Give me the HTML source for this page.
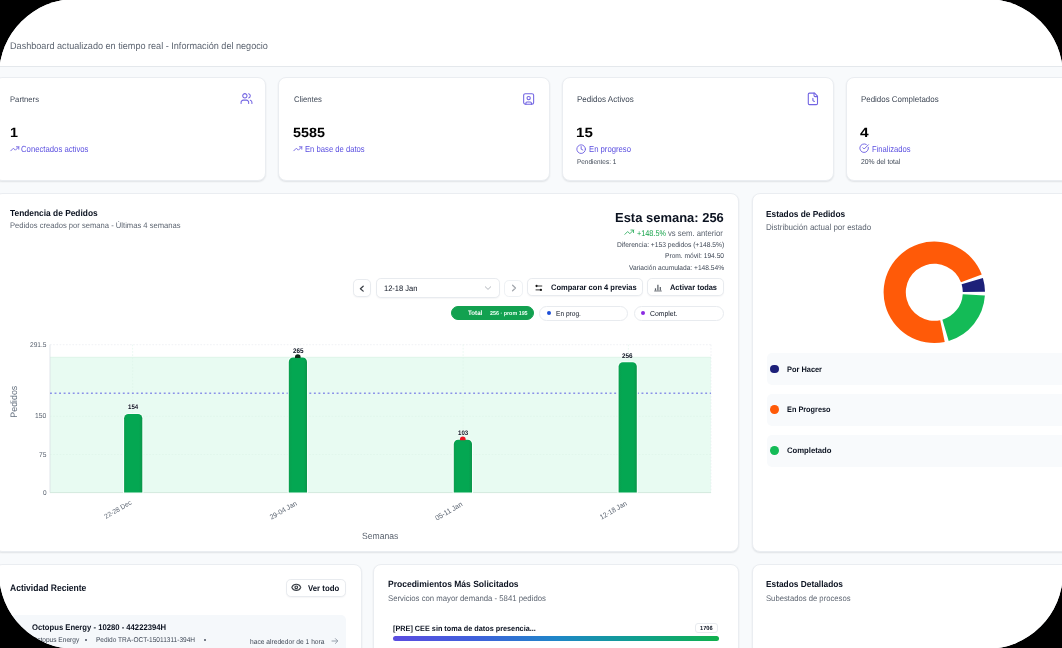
<!DOCTYPE html>
<html><head><meta charset="utf-8">
<style>
*{box-sizing:border-box;margin:0;padding:0}
html,body{width:1062px;height:648px;background:#000;overflow:hidden}
body{font-family:"Liberation Sans",sans-serif;color:#0f172a}
#wrap{position:absolute;left:-1px;top:-1px;width:1064px;height:650px;border-radius:76.6px;overflow:hidden;background:#f8fafc}
#in{position:absolute;left:1px;top:1px;width:1062px;height:648px;filter:blur(0.45px)}
#hdr{position:absolute;left:0;top:0;width:1062px;height:66.7px;background:#fff;border-bottom:1.6px solid #e4e8ec}
.t{position:absolute;white-space:nowrap;line-height:1;transform-origin:0 50%;text-rendering:geometricPrecision}
.card{position:absolute;background:#fff;border:1px solid #eaedf1;border-radius:8px;box-shadow:0 1px 1.6px rgba(20,25,35,.10)}
.btn{position:absolute;background:#fff;border:1.2px solid #e8ebef;border-radius:4.8px;box-shadow:0 1px 1.5px rgba(15,23,42,.04)}
.pill{position:absolute;background:#fff;border:1px solid #e8ebef;border-radius:9px}
.row{position:absolute;background:#f8fafc;border-radius:5px}
.dot{position:absolute;border-radius:50%}
svg{position:absolute;overflow:visible}
.ic{fill:none;stroke:#7264e2;stroke-width:1.9;stroke-linecap:round;stroke-linejoin:round}
</style></head><body>
<div id="wrap"><div id="in">
<div id="hdr"></div>

<!-- stat cards -->
<div class="card" style="left:-6px;top:77.1px;width:271.5px;height:103.8px"></div>
<div class="card" style="left:278px;top:77.1px;width:271.5px;height:103.8px"></div>
<div class="card" style="left:562px;top:77.1px;width:271.5px;height:103.8px"></div>
<div class="card" style="left:846px;top:77.1px;width:271.5px;height:103.8px"></div>

<!-- chart card -->
<div class="card" style="left:-6px;top:192.8px;width:745px;height:358.9px"></div>
<div class="card" style="left:751.6px;top:192.8px;width:330px;height:358.9px"></div>

<!-- bottom cards -->
<div class="card" style="left:-6px;top:563.6px;width:367.8px;height:120px"></div>
<div class="card" style="left:372.8px;top:563.6px;width:366.2px;height:120px"></div>
<div class="card" style="left:751.6px;top:563.6px;width:330px;height:120px"></div>

<!-- controls -->
<div class="btn" style="left:352.8px;top:279.2px;width:17.8px;height:17.6px"></div>
<div class="btn" style="left:375.7px;top:277.8px;width:124.6px;height:19.9px"></div>
<div class="btn" style="left:504.3px;top:279.6px;width:19.1px;height:17.4px;border-color:#eef1f4;box-shadow:none"></div>
<div class="btn" style="left:527.4px;top:277.9px;width:115.2px;height:18.6px"></div>
<div class="btn" style="left:647.2px;top:277.9px;width:77px;height:18.6px"></div>
<div class="pill" style="left:450.8px;top:305.5px;width:83.6px;height:14.8px;background:#12a150;border-color:#12a150"></div>
<div class="pill" style="left:539px;top:305.5px;width:89.2px;height:15.2px"></div>
<div class="pill" style="left:633.5px;top:305.5px;width:90px;height:15.2px"></div>
<div class="dot" style="left:546.8px;top:310.8px;width:4.4px;height:4.4px;background:#1d4ed8"></div>
<div class="dot" style="left:641.1px;top:310.8px;width:4.4px;height:4.4px;background:#8b2be2"></div>

<!-- legend rows -->
<div class="row" style="left:766.5px;top:353px;width:320px;height:32px"></div>
<div class="row" style="left:766.5px;top:393.7px;width:320px;height:32.5px"></div>
<div class="row" style="left:766.5px;top:435px;width:320px;height:31.5px"></div>
<div class="dot" style="left:770.3px;top:364.5px;width:8.8px;height:8.8px;background:#1d2079"></div>
<div class="dot" style="left:770.3px;top:405.2px;width:8.8px;height:8.8px;background:#ff5a08"></div>
<div class="dot" style="left:770.3px;top:446px;width:8.8px;height:8.8px;background:#14bb57"></div>

<!-- activity list item -->
<div class="row" style="left:10px;top:614.8px;width:335.5px;height:60px;background:#f5f8fb"></div>
<div class="dot" style="left:85px;top:638.7px;width:2px;height:2px;background:#4b5563"></div>
<div class="dot" style="left:203.8px;top:638.7px;width:2px;height:2px;background:#4b5563"></div>
<div class="btn" style="left:285.6px;top:578.8px;width:60px;height:18.4px"></div>

<!-- procedures -->
<div class="btn" style="left:694.9px;top:622.6px;width:23px;height:10.8px;border-radius:3px;box-shadow:none"></div>
<div style="position:absolute;left:393.3px;top:636px;width:325.5px;height:5.4px;border-radius:3px;background:linear-gradient(90deg,#5b4ce0 0%,#3f60dc 25%,#1f86c8 50%,#0f9f8e 75%,#10b04c 100%)"></div>

<!-- main svg: chart, donut, icons -->
<svg width="1062" height="648" viewBox="0 0 1062 648" style="left:0;top:0">
  <!-- chart band -->
  <rect x="50" y="357.3" width="661" height="135.2" fill="#e8fbf2"/>
  <line x1="50" y1="357.3" x2="711" y2="357.3" stroke="#d6f1e3" stroke-width="0.7"/>
  <!-- grid -->
  <g stroke="#e6e9ee" stroke-width="0.6" stroke-dasharray="1.6 1.6">
    <line x1="50" y1="344.7" x2="711" y2="344.7"/>
    <line x1="50" y1="416.4" x2="711" y2="416.4" stroke="#dcf3e7"/>
    <line x1="50" y1="454.5" x2="711" y2="454.5" stroke="#dcf3e7"/>
    <line x1="132.6" y1="344.7" x2="132.6" y2="492.5" stroke="#dcf3e7"/>
    <line x1="297.9" y1="344.7" x2="297.9" y2="492.5" stroke="#dcf3e7"/>
    <line x1="463.1" y1="344.7" x2="463.1" y2="492.5" stroke="#dcf3e7"/>
    <line x1="628.4" y1="344.7" x2="628.4" y2="492.5" stroke="#dcf3e7"/>
    <line x1="711" y1="344.7" x2="711" y2="492.5"/>
  </g>
  <line x1="50" y1="344.7" x2="50" y2="492.5" stroke="#d5dbe2" stroke-width="0.7"/>
  <line x1="50" y1="492.6" x2="711" y2="492.6" stroke="#cfe6da" stroke-width="0.9"/>
  <!-- avg line -->
  <line x1="50" y1="393.3" x2="711" y2="393.3" stroke="#8a91e8" stroke-width="1.6" stroke-dasharray="1.9 2.65"/>
  <!-- bars -->
  <defs><linearGradient id="bg" x1="0" x2="1" y1="0" y2="0"><stop offset="0" stop-color="#0a9e4e"/><stop offset="0.18" stop-color="#04a752"/><stop offset="0.82" stop-color="#04a752"/><stop offset="1" stop-color="#0b954a"/></linearGradient></defs>
  <g fill="url(#bg)" stroke="#f7fffb" stroke-width="2.2" paint-order="stroke">
    <path d="M124.1 492.5V418.3a4.3 4.3 0 0 1 4.3-4.3h9.6a4.3 4.3 0 0 1 4.3 4.3V492.5Z"/>
    <path d="M288.8 492.5V361.9a4.3 4.3 0 0 1 4.3-4.3h9.6a4.3 4.3 0 0 1 4.3 4.3V492.5Z"/>
    <path d="M453.8 492.5V444.1a4.3 4.3 0 0 1 4.3-4.3h9.6a4.3 4.3 0 0 1 4.3 4.3V492.5Z"/>
    <path d="M618.6 492.5V366.6a4.3 4.3 0 0 1 4.3-4.3h9.6a4.3 4.3 0 0 1 4.3 4.3V492.5Z"/>
  </g>
  <clipPath id="c1"><rect x="290" y="350" width="16" height="8.1"/></clipPath>
  <clipPath id="c2"><rect x="455" y="432" width="16" height="8.3"/></clipPath>
  <circle cx="297.8" cy="357.1" r="2.8" fill="#0c2a17" clip-path="url(#c1)"/>
  <circle cx="462.8" cy="439.2" r="2.8" fill="#ea1424" clip-path="url(#c2)"/>
  <!-- donut -->
  <path d="M985.00 291.86A50.7 50.7 0 0 0 982.91 277.90L961.63 284.21A28.5 28.5 0 0 1 962.80 292.05Z" fill="#1d2079"/><path d="M981.76 274.46A50.7 50.7 0 1 0 944.75 341.91L940.18 320.19A28.5 28.5 0 1 1 960.98 282.27Z" fill="#ff5a08"/><path d="M948.70 340.91A50.7 50.7 0 0 0 984.89 295.57L962.74 294.14A28.5 28.5 0 0 1 942.39 319.63Z" fill="#14bb57"/>
</svg>

<!-- users -->
<svg class="ic" viewBox="0 0 24 24" style="left:239.5px;top:91.9px;width:13px;height:13px"><path d="M16 21v-2a4 4 0 0 0-4-4H6a4 4 0 0 0-4 4v2"/><circle cx="9" cy="7" r="4"/><path d="M22 21v-2a4 4 0 0 0-3-3.87"/><path d="M16 3.13a4 4 0 0 1 0 7.75"/></svg>
<!-- contact -->
<svg class="ic" viewBox="0 0 24 24" style="left:522.3px;top:92.1px;width:13.3px;height:13.3px"><path d="M7 22v-2a2 2 0 0 1 2-2h6a2 2 0 0 1 2 2v2"/><circle cx="12" cy="11" r="3"/><rect x="3" y="3" width="18" height="19" rx="3"/></svg>
<!-- file -->
<svg class="ic" viewBox="0 0 24 24" style="left:806.1px;top:91.9px;width:13.8px;height:13.8px"><path d="M15 2H6a2 2 0 0 0-2 2v16a2 2 0 0 0 2 2h12a2 2 0 0 0 2-2V7Z"/><path d="M14 2v4a2 2 0 0 0 2 2h4"/><path d="M12 11v4l2.5 1.5"/></svg>
<!-- trending up x2 -->
<svg class="ic" viewBox="0 0 24 24" style="left:9.6px;top:144px;width:9.6px;height:9.6px;stroke-width:2.3"><polyline points="22 7 13.5 15.5 8.5 10.5 2 17"/><polyline points="16 7 22 7 22 13"/></svg>
<svg class="ic" viewBox="0 0 24 24" style="left:292.9px;top:144px;width:9.6px;height:9.6px;stroke-width:2.3"><polyline points="22 7 13.5 15.5 8.5 10.5 2 17"/><polyline points="16 7 22 7 22 13"/></svg>
<!-- clock -->
<svg class="ic" viewBox="0 0 24 24" style="left:576.2px;top:143.5px;width:10.3px;height:10.3px;stroke-width:2.2"><circle cx="12" cy="12" r="10"/><polyline points="12 6 12 12 16 14"/></svg>
<!-- check circle -->
<svg class="ic" viewBox="0 0 24 24" style="left:859.4px;top:143.4px;width:10.3px;height:10.3px;stroke-width:2.2"><path d="M21.801 10A10 10 0 1 1 17 3.335"/><path d="m9 11 3 3L22 4"/></svg>
<!-- green trending -->
<svg class="ic" viewBox="0 0 24 24" style="left:624.1px;top:226.9px;width:10.4px;height:10.4px;stroke:#22a957;stroke-width:1.9"><polyline points="22 7 13.5 15.5 8.5 10.5 2 17"/><polyline points="16 7 22 7 22 13"/></svg>
<!-- chevrons -->
<svg viewBox="0 0 10 10" style="left:357.3px;top:283.6px;width:9.4px;height:9.4px" fill="none" stroke="#3b3f46" stroke-width="1.35" stroke-linecap="round" stroke-linejoin="round"><path d="M6.6 2.4 3.6 5l3 2.6"/></svg>
<svg viewBox="0 0 10 10" style="left:509.2px;top:283.2px;width:10px;height:10px" fill="none" stroke="#a3a7ad" stroke-width="1.3" stroke-linecap="round" stroke-linejoin="round"><path d="M3.6 2.3 6.5 5l-2.9 2.7"/></svg>
<svg viewBox="0 0 10 10" style="left:483px;top:283px;width:10px;height:10px" fill="none" stroke="#b3b7bd" stroke-width="1" stroke-linecap="round" stroke-linejoin="round"><path d="M2.3 3.8 5 6.4l2.7-2.6"/></svg>
<!-- sliders -->
<svg viewBox="0 0 10 10" style="left:533.5px;top:282.5px;width:10px;height:10px"><circle cx="2.6" cy="3" r="1.15" fill="#111"/><line x1="3.5" y1="3" x2="8.2" y2="3" stroke="#222" stroke-width="0.9"/><circle cx="6.9" cy="6.9" r="1.15" fill="#111"/><line x1="1.6" y1="6.9" x2="6" y2="6.9" stroke="#222" stroke-width="0.9"/></svg>
<!-- bar chart -->
<svg viewBox="0 0 10 10" style="left:653px;top:282.5px;width:10px;height:10px" stroke="#555b63" stroke-linecap="butt"><line x1="2.5" y1="5.3" x2="2.5" y2="7.6" stroke-width="1.2"/><line x1="4.9" y1="1.7" x2="4.9" y2="7.6" stroke-width="1.2"/><line x1="7.3" y1="4" x2="7.3" y2="7.6" stroke-width="1.2"/><line x1="1.2" y1="8" x2="8.8" y2="8" stroke-width="0.8"/></svg>
<!-- eye -->
<svg viewBox="0 0 24 24" style="left:290.9px;top:582.4px;width:10.6px;height:10.6px" fill="none" stroke="#3a3f46" stroke-width="2.6" stroke-linecap="round" stroke-linejoin="round"><path d="M2.062 12.348a1 1 0 0 1 0-.696 10.75 10.75 0 0 1 19.876 0 1 1 0 0 1 0 .696 10.75 10.75 0 0 1-19.876 0"/><circle cx="12" cy="12" r="3"/></svg>
<!-- arrow right -->
<svg viewBox="0 0 10 10" style="left:329.5px;top:636px;width:10px;height:10px" fill="none" stroke="#8d96a3" stroke-width="0.9" stroke-linecap="round" stroke-linejoin="round"><path d="M2 5h5.6M5.4 2.6 7.8 5 5.4 7.4"/></svg>


<div class="t" style="left:10.3px;top:42px;font-size:9.6px;font-weight:400;color:#5c6470;transform:scaleX(0.948)">Dashboard actualizado en tiempo real - Información del negocio</div>
<div class="t" style="left:10.3px;top:96px;font-size:8.1px;font-weight:400;color:#3f4856;transform:scaleX(0.947)">Partners</div>
<div class="t" style="left:9.7px;top:126px;font-size:13.4px;font-weight:700;color:#000;transform:scaleX(1.073)">1</div>
<div class="t" style="left:21.0px;top:145px;font-size:8.8px;font-weight:400;color:#5a4ee0;transform:scaleX(0.879)">Conectados activos</div>
<div class="t" style="left:293.6px;top:96px;font-size:8.2px;font-weight:400;color:#3f4856;transform:scaleX(0.941)">Clientes</div>
<div class="t" style="left:293.1px;top:126px;font-size:13.4px;font-weight:700;color:#000;transform:scaleX(1.070)">5585</div>
<div class="t" style="left:304.7px;top:145px;font-size:8.8px;font-weight:400;color:#5a4ee0;transform:scaleX(0.872)">En base de datos</div>
<div class="t" style="left:577.1px;top:95px;font-size:8.5px;font-weight:400;color:#3f4856;transform:scaleX(0.945)">Pedidos Activos</div>
<div class="t" style="left:576.4px;top:126px;font-size:13.4px;font-weight:700;color:#000;transform:scaleX(1.127)">15</div>
<div class="t" style="left:588.7px;top:145px;font-size:8.8px;font-weight:400;color:#5a4ee0;transform:scaleX(0.876)">En progreso</div>
<div class="t" style="left:577.1px;top:160px;font-size:6.8px;font-weight:400;color:#3f4856;transform:scaleX(0.945)">Pendientes: 1</div>
<div class="t" style="left:860.8px;top:95px;font-size:8.4px;font-weight:400;color:#3f4856;transform:scaleX(0.947)">Pedidos Completados</div>
<div class="t" style="left:860.3px;top:126px;font-size:13.4px;font-weight:700;color:#000;transform:scaleX(1.154)">4</div>
<div class="t" style="left:871.8px;top:145px;font-size:8.8px;font-weight:400;color:#5a4ee0;transform:scaleX(0.867)">Finalizados</div>
<div class="t" style="left:860.8px;top:158px;font-size:7.2px;font-weight:400;color:#3f4856;transform:scaleX(0.944)">20% del total</div>
<div class="t" style="left:10.4px;top:209px;font-size:8.9px;font-weight:700;color:#0b1220;transform:scaleX(0.942)">Tendencia de Pedidos</div>
<div class="t" style="left:10.4px;top:222px;font-size:8.1px;font-weight:400;color:#5c6470;transform:scaleX(0.941)">Pedidos creados por semana - Últimas 4 semanas</div>
<div class="t" style="left:615.1px;top:211px;font-size:13.0px;font-weight:700;color:#0b1220;transform:scaleX(0.997)">Esta semana: 256</div>
<div class="t" style="left:637.3px;top:229px;font-size:8.4px;font-weight:400;color:#16a34a;transform:scaleX(0.868)">+148.5%</div>
<div class="t" style="left:668.4px;top:229px;font-size:8.4px;font-weight:400;color:#5c6470;transform:scaleX(0.922)">vs sem. anterior</div>
<div class="t" style="left:616.6px;top:242px;font-size:7.1px;font-weight:400;color:#3f4856;transform:scaleX(0.944)">Diferencia: +153 pedidos (+148.5%)</div>
<div class="t" style="left:664.9px;top:253px;font-size:7.0px;font-weight:400;color:#3f4856;transform:scaleX(0.948)">Prom. móvil: 194.50</div>
<div class="t" style="left:628.9px;top:265px;font-size:7.0px;font-weight:400;color:#3f4856;transform:scaleX(0.946)">Variación acumulada: +148.54%</div>
<div class="t" style="left:383.6px;top:285px;font-size:8.0px;font-weight:400;color:#0b1220;transform:scaleX(0.939)">12-18 Jan</div>
<div class="t" style="left:550.7px;top:284px;font-size:8.0px;font-weight:700;color:#0b1220;transform:scaleX(0.940)">Comparar con 4 previas</div>
<div class="t" style="left:670.2px;top:284px;font-size:7.9px;font-weight:700;color:#0b1220;transform:scaleX(0.939)">Activar todas</div>
<div class="t" style="left:467.8px;top:311px;font-size:6.5px;font-weight:700;color:#fff;transform:scaleX(0.950)">Total</div>
<div class="t" style="left:489.6px;top:312px;font-size:5.7px;font-weight:700;color:#eafff2;transform:scaleX(0.944)">256 · prom 195</div>
<div class="t" style="left:555.6px;top:310px;font-size:7.2px;font-weight:400;color:#0b1220;transform:scaleX(0.918)">En prog.</div>
<div class="t" style="left:649.5px;top:310px;font-size:7.2px;font-weight:400;color:#0b1220;transform:scaleX(0.954)">Complet.</div>
<div class="t" style="left:30.2px;top:342px;font-size:7.0px;font-weight:400;color:#5a6370;transform:scaleX(0.942)">291.5</div>
<div class="t" style="left:35.4px;top:412px;font-size:7.2px;font-weight:400;color:#5a6370;transform:scaleX(0.940)">150</div>
<div class="t" style="left:39.3px;top:452px;font-size:7.1px;font-weight:400;color:#5a6370;transform:scaleX(0.937)">75</div>
<div class="t" style="left:43.1px;top:491px;font-size:6.9px;font-weight:400;color:#5a6370;transform:scaleX(0.938)">0</div>
<div class="t" style="left:128.1px;top:405px;font-size:6.5px;font-weight:700;color:#0b1220;transform:scaleX(0.940);text-shadow:0 0 1.5px #fff,0 0 1.5px #fff">154</div>
<div class="t" style="left:292.7px;top:349px;font-size:6.7px;font-weight:700;color:#0b1220;transform:scaleX(0.948);text-shadow:0 0 1.5px #fff,0 0 1.5px #fff">265</div>
<div class="t" style="left:457.7px;top:431px;font-size:6.5px;font-weight:700;color:#0b1220;transform:scaleX(0.940);text-shadow:0 0 1.5px #fff,0 0 1.5px #fff">103</div>
<div class="t" style="left:622.4px;top:354px;font-size:6.7px;font-weight:700;color:#0b1220;transform:scaleX(0.948);text-shadow:0 0 1.5px #fff,0 0 1.5px #fff">256</div>
<div class="t" style="left:362.2px;top:532px;font-size:9.1px;font-weight:400;color:#5c6470;transform:scaleX(0.944)">Semanas</div>
<div class="t" style="left:765.8px;top:210px;font-size:8.9px;font-weight:700;color:#0b1220;transform:scaleX(0.939)">Estados de Pedidos</div>
<div class="t" style="left:765.8px;top:223px;font-size:8.5px;font-weight:400;color:#5c6470;transform:scaleX(0.939)">Distribución actual por estado</div>
<div class="t" style="left:786.5px;top:366px;font-size:8.0px;font-weight:700;color:#0b1220;transform:scaleX(0.926)">Por Hacer</div>
<div class="t" style="left:786.5px;top:406px;font-size:8.0px;font-weight:700;color:#0b1220;transform:scaleX(0.914)">En Progreso</div>
<div class="t" style="left:786.5px;top:447px;font-size:8.0px;font-weight:700;color:#0b1220;transform:scaleX(0.963)">Completado</div>
<div class="t" style="left:9.6px;top:584px;font-size:9.5px;font-weight:700;color:#0b1220;transform:scaleX(0.898)">Actividad Reciente</div>
<div class="t" style="left:308.4px;top:584px;font-size:8.3px;font-weight:700;color:#0b1220;transform:scaleX(0.939)">Ver todo</div>
<div class="t" style="left:32.2px;top:624px;font-size:8.2px;font-weight:700;color:#0b1220;transform:scaleX(0.938)">Octopus Energy - 10280 - 44222394H</div>
<div class="t" style="left:32.2px;top:637px;font-size:7.0px;font-weight:400;color:#3f4856;transform:scaleX(0.940)">Octopus Energy</div>
<div class="t" style="left:95.9px;top:637px;font-size:7.0px;font-weight:400;color:#3f4856;transform:scaleX(0.936)">Pedido TRA-OCT-15011311-394H</div>
<div class="t" style="left:250.2px;top:639px;font-size:7.0px;font-weight:400;color:#3f4856;transform:scaleX(0.952)">hace alrededor de 1 hora</div>
<div class="t" style="left:387.9px;top:580px;font-size:9.0px;font-weight:700;color:#0b1220;transform:scaleX(0.946)">Procedimientos Más Solicitados</div>
<div class="t" style="left:387.9px;top:595px;font-size:8.2px;font-weight:400;color:#5c6470;transform:scaleX(0.948)">Servicios con mayor demanda - 5841 pedidos</div>
<div class="t" style="left:393.3px;top:625px;font-size:7.7px;font-weight:700;color:#0b1220;transform:scaleX(0.947)">[PRE] CEE sin toma de datos presencia...</div>
<div class="t" style="left:700.1px;top:626px;font-size:6.0px;font-weight:700;color:#0b1220;transform:scaleX(0.944)">1706</div>
<div class="t" style="left:766.1px;top:580px;font-size:8.9px;font-weight:700;color:#0b1220;transform:scaleX(0.940)">Estados Detallados</div>
<div class="t" style="left:766.1px;top:595px;font-size:8.2px;font-weight:400;color:#5c6470;transform:scaleX(0.938)">Subestados de procesos</div>
<div class="t" style="left:100.0px;top:499.9px;font-size:6.89px;color:#5a6370;transform-origin:100% 50%;transform:rotate(-30deg) scaleX(0.944)">22-28 Dec</div>
<div class="t" style="left:264.7px;top:499.7px;font-size:7.15px;color:#5a6370;transform-origin:100% 50%;transform:rotate(-30deg) scaleX(0.943)">29-04 Jan</div>
<div class="t" style="left:429.7px;top:499.7px;font-size:7.27px;color:#5a6370;transform-origin:100% 50%;transform:rotate(-30deg) scaleX(0.943)">05-11 Jan</div>
<div class="t" style="left:594.7px;top:499.7px;font-size:7.15px;color:#5a6370;transform-origin:100% 50%;transform:rotate(-30deg) scaleX(0.943)">12-18 Jan</div>
<div class="t" style="left:-3.4px;top:397.3px;font-size:9.39px;color:#64707f;transform-origin:50% 50%;transform:rotate(-90deg) scaleX(0.943)">Pedidos</div>
</div></div>
</body></html>
